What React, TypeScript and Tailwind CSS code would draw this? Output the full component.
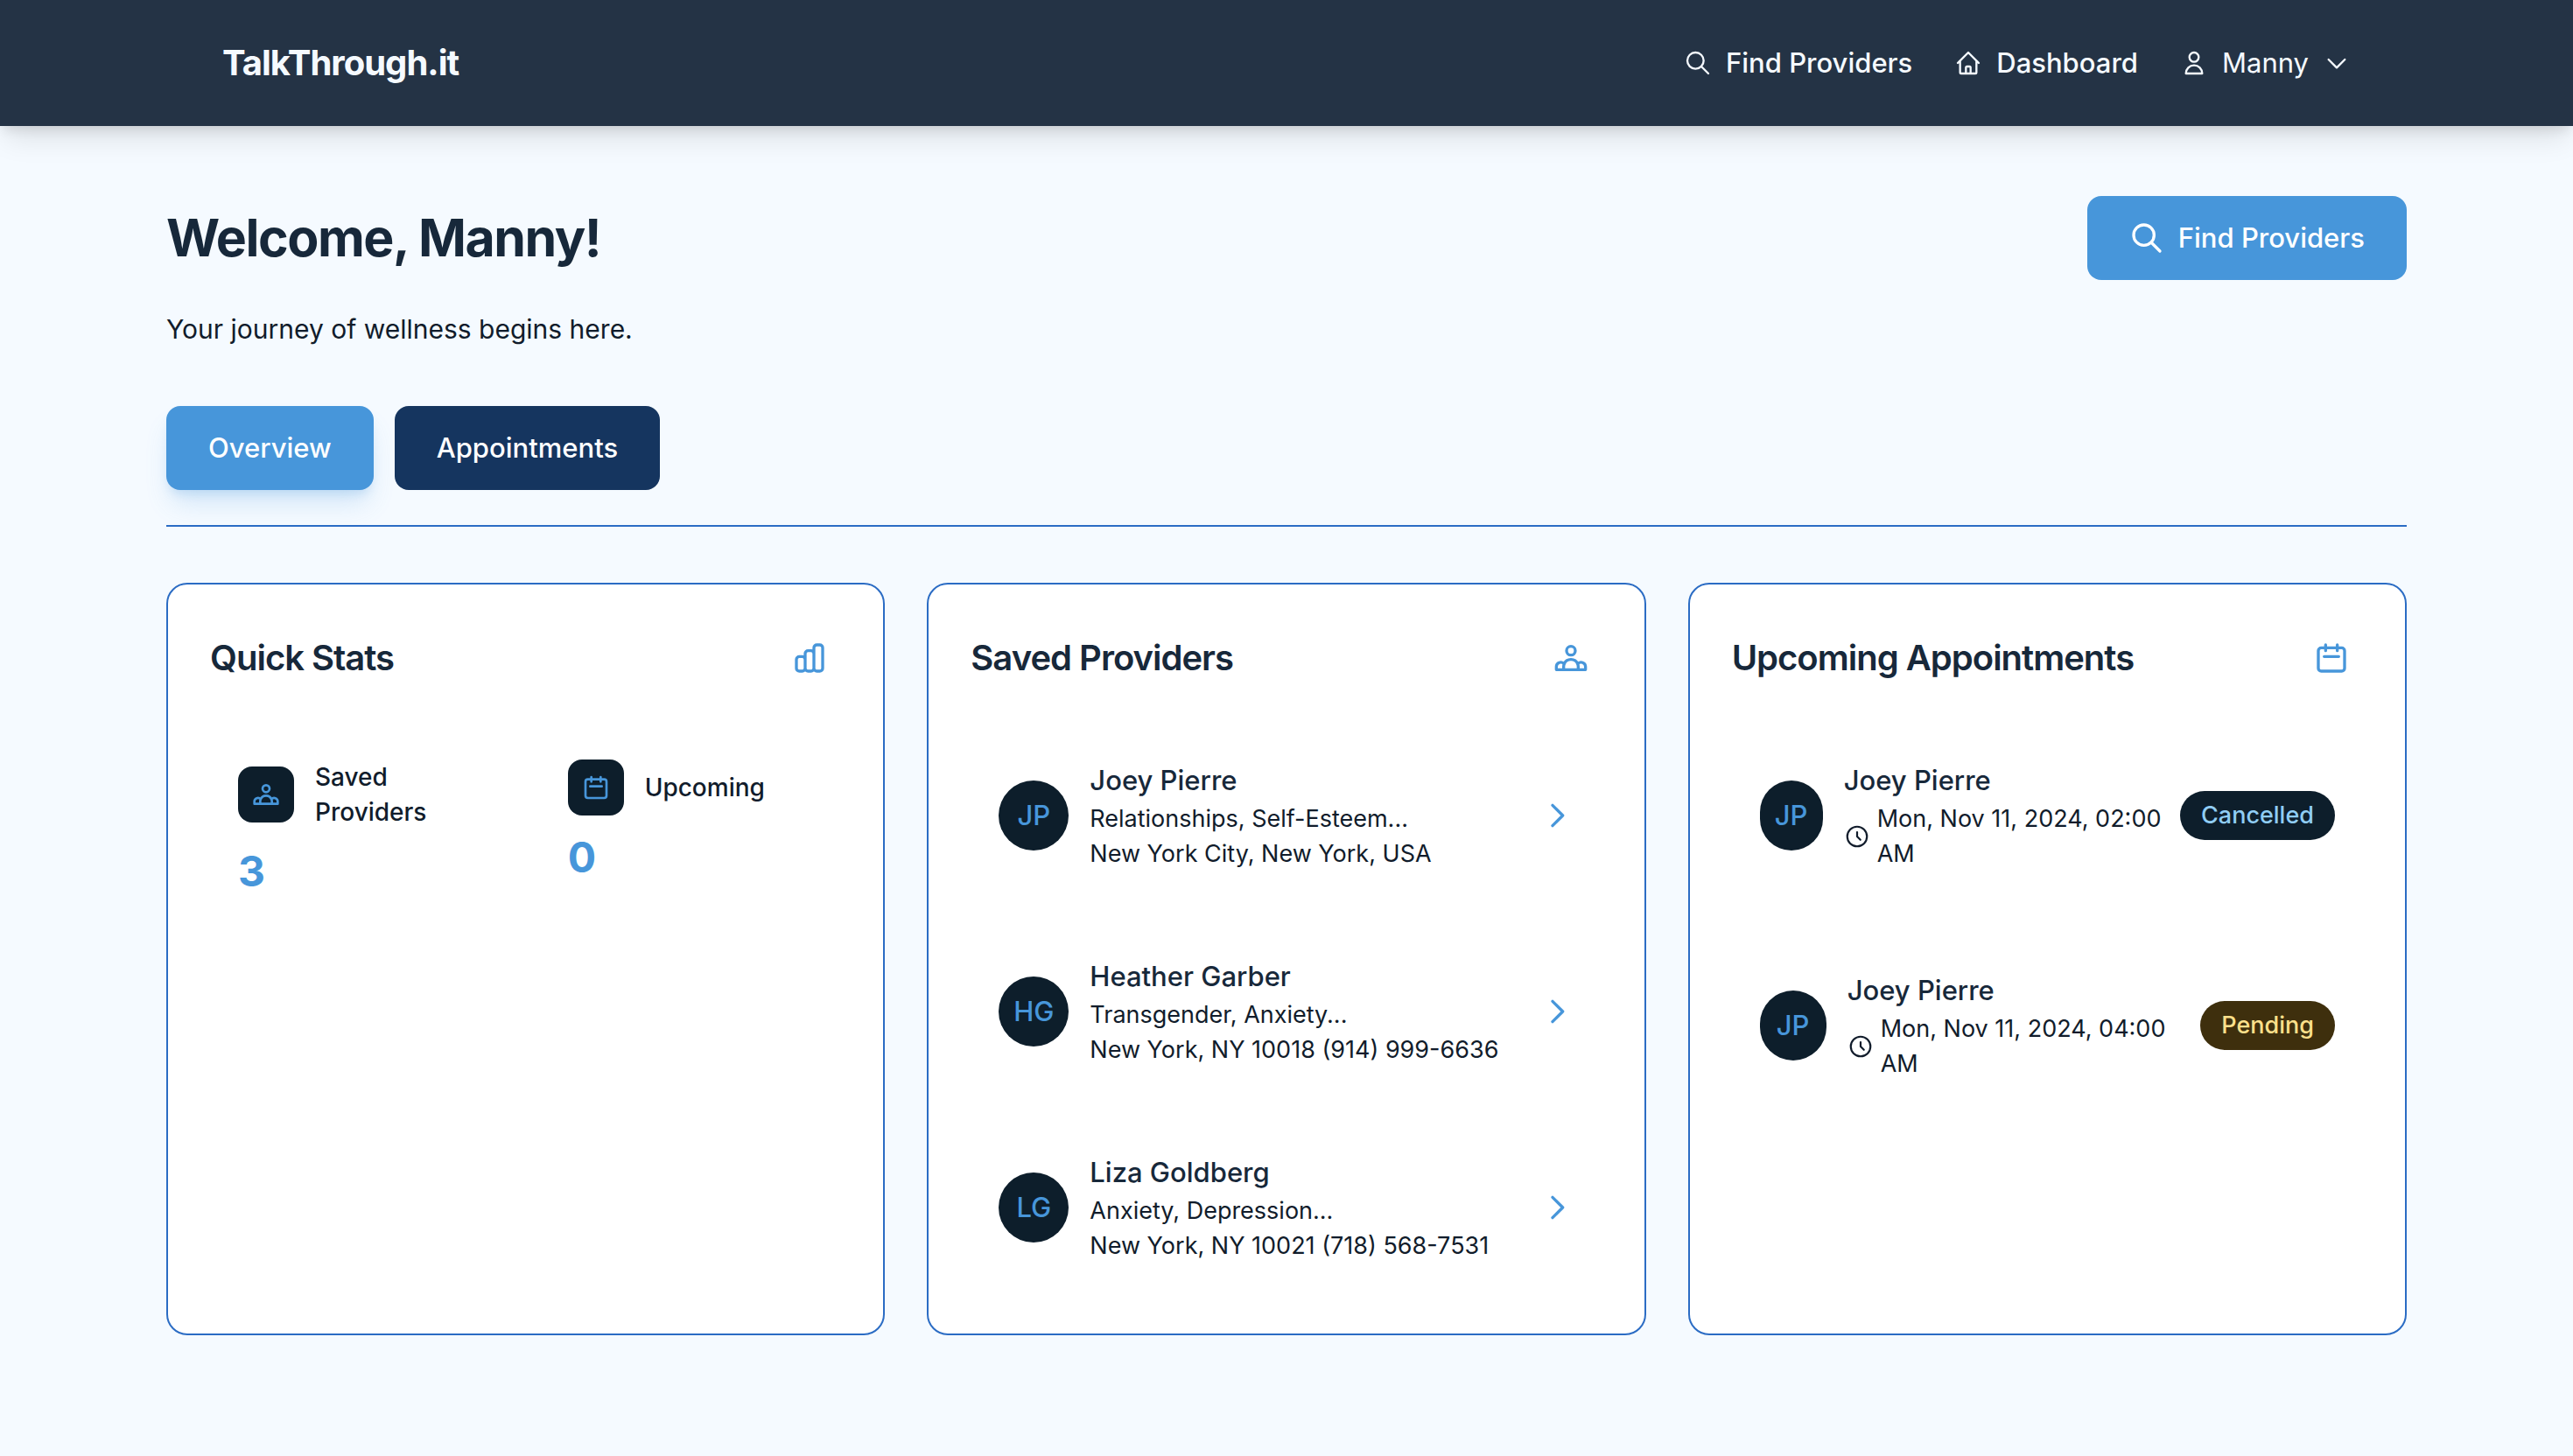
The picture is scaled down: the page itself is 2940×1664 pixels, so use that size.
import React from "react";

type IconProps = { d: string; className?: string; thin?: boolean };

const paths = {
  search: "M21 21l-6-6m2-5a7 7 0 11-14 0 7 7 0 0114 0z",
  home: "M3 12l2-2m0 0l7-7 7 7M5 10v10a1 1 0 001 1h3m10-11l2 2m-2-2v10a1 1 0 01-1 1h-3m-6 0a1 1 0 001-1v-4a1 1 0 011-1h2a1 1 0 011 1v4a1 1 0 001 1m-6 0h6",
  user: "M16 7a4 4 0 11-8 0 4 4 0 018 0zM12 14a7 7 0 00-7 7h14a7 7 0 00-7-7z",
  chevronDown: "M19 9l-7 7-7-7",
  chevronRight: "M9 5l7 7-7 7",
  chart: "M9 19v-6a2 2 0 00-2-2H5a2 2 0 00-2 2v6a2 2 0 002 2h2a2 2 0 002-2zm0 0V9a2 2 0 012-2h2a2 2 0 012 2v10m-6 0a2 2 0 002 2h2a2 2 0 002-2m0 0V5a2 2 0 012-2h2a2 2 0 012 2v14a2 2 0 01-2 2h-2a2 2 0 01-2-2z",
  group: "M17 20h5v-2a3 3 0 00-5.356-1.857M17 20H7m10 0v-2c0-.656-.126-1.283-.356-1.857M7 20H2v-2a3 3 0 015.356-1.857M7 20v-2c0-.656.126-1.283.356-1.857m0 0a5.002 5.002 0 019.288 0M15 7a3 3 0 11-6 0 3 3 0 016 0z",
  calendar: "M8 7V3m8 4V3m-9 8h10M5 21h14a2 2 0 002-2V7a2 2 0 00-2-2H5a2 2 0 00-2 2v12a2 2 0 002 2z",
  clock: "M12 8v4l3 3m6-3a9 9 0 11-18 0 9 9 0 0118 0z",
};

function Icon({ d, className = "size-8", thin = false }: IconProps) {
  return (
    <svg
      aria-hidden="true"
      viewBox="0 0 24 24"
      fill="none"
      stroke="currentColor"
      strokeWidth={thin ? 1.75 : 2}
      strokeLinecap="round"
      strokeLinejoin="round"
      className={"shrink-0 " + className}
    >
      <path d={d} />
    </svg>
  );
}

function Card({ title, icon, children }: { title: string; icon: string; children: React.ReactNode }) {
  return (
    <section className="rounded-3xl border-2 border-[#2b6cc4] bg-white p-12">
      <div className="mb-12 flex items-center justify-between">
        <h2 className="text-[40px] leading-14 font-semibold tracking-tight text-[#17283a]">{title}</h2>
        <span className="p-4 text-[#4796da]">
          <Icon d={icon} className="size-10" />
        </span>
      </div>
      {children}
    </section>
  );
}

function Stat({ icon, label, value }: { icon: string; label: string; value: number }) {
  return (
    <div className="p-8">
      <div className="flex items-center gap-6">
        <span className="rounded-2xl bg-[#0d1e2b] p-4 text-[#4796da]">
          <Icon d={icon} />
        </span>
        <span className="text-[28px] leading-10 font-medium">{label}</span>
      </div>
      <p className="mt-4 text-5xl leading-16 font-bold text-[#4796da]">{value}</p>
    </div>
  );
}

const providers = [
  { initials: "JP", name: "Joey Pierre", focus: "Relationships, Self-Esteem...", place: "New York City, New York, USA" },
  { initials: "HG", name: "Heather Garber", focus: "Transgender, Anxiety...", place: "New York, NY 10018 (914) 999-6636" },
  { initials: "LG", name: "Liza Goldberg", focus: "Anxiety, Depression...", place: "New York, NY 10021 (718) 568-7531" },
];

const appointments = [
  { time: "Mon, Nov 11, 2024, 02:00 AM", status: "Cancelled", avatar: "w-18", pill: "bg-[#0d1e2b] text-[#90cdf4]" },
  { time: "Mon, Nov 11, 2024, 04:00 AM", status: "Pending", avatar: "w-19", pill: "bg-[#3e2f0d] text-[#fde08b]" },
];

export default function App() {
  return (
    <div className="min-h-screen bg-[#f5faff] font-['Inter',sans-serif] text-[31px] leading-12 text-[#111c2b]">
      <header className="relative bg-[#243345] text-[#f5faff] shadow-[0_20px_30px_-6px_rgba(0,0,0,0.1),0_8px_12px_-4px_rgba(0,0,0,0.1)]">
        <div className="mx-auto flex h-36 max-w-[2560px] items-center justify-between px-16">
          <a href="#" className="text-[40px] leading-14 font-bold tracking-tight">TalkThrough.it</a>
          <nav className="flex items-center gap-12">
            <a href="#providers" className="flex items-center gap-4 font-medium">
              <Icon d={paths.search} thin />
              Find Providers
            </a>
            <a href="#dashboard" className="flex items-center gap-4 font-medium">
              <Icon d={paths.home} thin />
              Dashboard
            </a>
            <button type="button" className="flex items-center gap-4">
              <Icon d={paths.user} thin />
              Manny
              <Icon d={paths.chevronDown} thin />
            </button>
          </nav>
        </div>
      </header>

      <main className="mx-auto max-w-[2560px] pt-20">
        <div className="flex items-center justify-between">
          <h1 className="text-[59px] leading-18 font-bold tracking-tight text-[#17283a]">Welcome, Manny!</h1>
          <button type="button" className="flex h-24 items-center gap-4 rounded-2xl bg-[#4796da] px-12 font-medium text-white">
            <Icon d={paths.search} className="size-10" />
            Find Providers
          </button>
        </div>
        <p className="mt-8 text-[30px] leading-12">Your journey of wellness begins here.</p>

        <div className="mt-16 flex gap-6 border-b-2 border-[#2b6cc4] pb-10 font-medium text-white">
          <button type="button" className="h-24 rounded-2xl bg-[#4796da] px-12 shadow-[0_20px_30px_-6px_rgba(71,150,218,0.2),0_8px_12px_-4px_rgba(71,150,218,0.2)]">
            Overview
          </button>
          <button type="button" className="h-24 rounded-2xl bg-[#15355f] px-12">Appointments</button>
        </div>

        <div className="mt-16 grid grid-cols-3 gap-12">
          <Card title="Quick Stats" icon={paths.chart}>
            <div className="grid grid-cols-2 gap-8">
              <Stat icon={paths.group} label="Saved Providers" value={3} />
              <Stat icon={paths.calendar} label="Upcoming" value={0} />
            </div>
          </Card>

          <Card title="Saved Providers" icon={paths.group}>
            <ul className="flex flex-col gap-8">
              {providers.map((p) => (
                <li key={p.initials} className="flex items-center gap-6 p-8">
                  <span className="flex size-20 shrink-0 items-center justify-center rounded-full bg-[#0d1e2b] font-medium text-[#4796da]">
                    {p.initials}
                  </span>
                  <div className="min-w-0 flex-1 text-[27px] leading-10 whitespace-nowrap">
                    <h3 className="text-[31px] leading-12 font-medium text-[#17283a]">{p.name}</h3>
                    <p>{p.focus}</p>
                    <p>{p.place}</p>
                  </div>
                  <a href="#provider" aria-label={p.name} className="-ml-6 text-[#4796da]">
                    <Icon d={paths.chevronRight} className="size-10" />
                  </a>
                </li>
              ))}
            </ul>
          </Card>

          <Card title="Upcoming Appointments" icon={paths.calendar}>
            <ul className="flex flex-col gap-12">
              {appointments.map((a) => (
                <li key={a.status} className="flex items-center p-8">
                  <span className={"mr-6 flex h-20 shrink-0 items-center justify-center rounded-full bg-[#0d1e2b] font-medium text-[#4796da] " + a.avatar}>
                    JP
                  </span>
                  <div className="min-w-0 flex-1">
                    <h3 className="font-medium text-[#17283a]">Joey Pierre</h3>
                    <p className="flex items-center gap-2 text-[27px] leading-10">
                      <Icon d={paths.clock} className="size-[30px]" thin />
                      <span className="max-w-[340px]">{a.time}</span>
                    </p>
                  </div>
                  <span className={"rounded-full px-6 py-2 text-[27px] leading-10 font-medium " + a.pill}>{a.status}</span>
                </li>
              ))}
            </ul>
          </Card>
        </div>
      </main>
    </div>
  );
}
